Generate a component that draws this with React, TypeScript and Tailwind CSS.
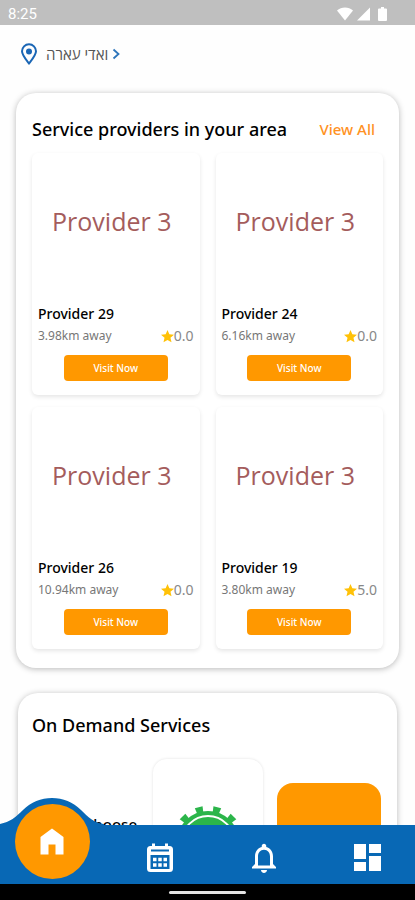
const providers = [
  { name: 'Provider 29', distance: '3.98km away', rating: '0.0' },
  { name: 'Provider 24', distance: '6.16km away', rating: '0.0' },
  { name: 'Provider 26', distance: '10.94km away', rating: '0.0' },
  { name: 'Provider 19', distance: '3.80km away', rating: '5.0' },
];

function StatusBar() {
  return (
    <div className="flex h-[25px] shrink-0 items-center justify-between bg-[#bfbfbf] pt-0.5 pr-7 pl-2 font-['Roboto',sans-serif] text-[15px] leading-5 text-white">
      <span>8:25</span>
      <div className="flex items-center gap-1">
        <svg className="h-[14px] w-4" viewBox="0 0 16 14" fill="white" aria-hidden="true">
          <path d="M0 3.500C4.400-.4 11.600-.4 16 3.500L8 13.500z" />
        </svg>
        <svg className="h-[14px] w-[13px]" viewBox="0 0 13 14" fill="white" aria-hidden="true">
          <path d="M0 13.500 13 .5v13z" />
        </svg>
        <svg className="ml-1 h-[14px] w-[9px]" viewBox="0 0 9 14" fill="white" aria-hidden="true">
          <path d="M1 1.500h2V0h3v1.500h2a1 1 0 0 1 1 1V13a1 1 0 0 1-1 1H1a1 1 0 0 1-1-1V2.500a1 1 0 0 1 1-1z" />
        </svg>
      </div>
    </div>
  );
}

function ProviderCard({ name, distance, rating }: { name: string; distance: string; rating: string }) {
  return (
    <article className="flex flex-col rounded-md bg-white px-1.5 pb-3.5 shadow-[0_2px_4px_rgba(0,0,0,0.10)]">
      <div className="flex h-[150px] items-center justify-center pr-2 pb-3 font-['Open_Sans',sans-serif] text-[25px] text-[#a45c5c]">
        Provider 3
      </div>
      <h3 className="text-sm leading-[22px] font-medium text-black">{name}</h3>
      <div className="flex h-[22px] items-center justify-between text-[#777]">
        <span className="text-xs">{distance}</span>
        <span className="flex items-center text-sm text-[#888]">
          <svg className="size-[13px]" viewBox="0 0 24 24" fill="#ffc107" aria-hidden="true">
            <path d="M12 18.300 19.400 22.800 17.500 14.300 24 8.700 15.400 7.900 12 0 8.600 7.900 0 8.700 6.500 14.300 4.600 22.800z" />
          </svg>
          {rating}
        </span>
      </div>
      <button
        type="button"
        className="mx-auto mt-2 h-[26px] w-2/3 rounded-sm bg-[#ff9800] text-[10px] font-medium text-white"
      >
        Visit Now
      </button>
    </article>
  );
}

function Gear() {
  return (
    <svg className="size-[72px]" viewBox="0 0 72 72" aria-hidden="true">
      <g fill="#2bb54a">
        <circle cx="36" cy="36" r="31" />
        {[15, 45, 75, 105, 135, 165, 195, 225, 255, 285, 315, 345].map((angle) => (
          <path key={angle} d="M33 7 32 0h8l-1 7z" transform={`rotate(${angle} 36 36)`} />
        ))}
      </g>
      <circle cx="36" cy="36" r="26" fill="none" stroke="white" strokeWidth="2" />
    </svg>
  );
}

function BottomNav() {
  return (
    <nav className="relative flex h-[59px] shrink-0 bg-[#0868b5]">
      <svg
        className="absolute bottom-full left-0 h-[27px] w-[104px]"
        viewBox="0 0 104 27"
        fill="#0868b5"
        aria-hidden="true"
      >
        <path d="M0 27V26C10 24 16 19 23 12 31 4 41 0 52 0S73 4 81 12C88 19 94 25 104 26V27z" />
      </svg>
      <div className="relative flex w-[104px] shrink-0 justify-center">
        <button
          type="button"
          aria-label="Home"
          className="-mt-[21px] flex size-[75px] items-center justify-center rounded-full bg-[#ff9800]"
        >
          <svg className="size-9" viewBox="0 0 36 36" fill="white" aria-hidden="true">
            <path d="M18 4.500 29.500 13v17.500h-8v-10h-7v10h-8V13z" />
          </svg>
        </button>
      </div>
      <div className="flex flex-1 items-center justify-between pt-1.5 pr-[34px] pl-[42px]">
        <button type="button" aria-label="Calendar">
          <svg className="h-[30px] w-7" viewBox="0 0 28 30" aria-hidden="true">
            <path
              d="M4.500 3H6V.5h3V3h10V.5h3V3h1.500A3.500 3.500 0 0 1 27 6.500v19a3.500 3.500 0 0 1-3.500 3.500h-19A3.500 3.500 0 0 1 1 25.500v-19A3.500 3.500 0 0 1 4.500 3z"
              fill="white"
            />
            <path d="M5 6.500h18v2H5zM4.500 12h19v14h-19z" fill="#0868b5" />
            <path d="M7 16.500h14M7 22h14" stroke="white" strokeWidth="3.500" strokeDasharray="3.500 1.750" />
          </svg>
        </button>
        <button type="button" aria-label="Notifications">
          <svg className="h-[30px] w-6" viewBox="4 2 16 20" fill="white" aria-hidden="true">
            <path d="M12 22c1.100 0 2-.9 2-2h-4c0 1.100.9 2 2 2zm6-6v-5c0-3.070-1.630-5.640-4.500-6.320V4c0-.83-.67-1.500-1.500-1.500s-1.500.67-1.500 1.500v.68C7.640 5.360 6 7.920 6 11v5l-2 2v1h16v-1l-2-2zm-2 1H8v-6c0-2.480 1.510-4.500 4-4.500s4 2.020 4 4.500v6z" />
          </svg>
        </button>
        <button type="button" aria-label="Dashboard">
          <svg className="size-[27px]" viewBox="3 3 18 18" fill="white" aria-hidden="true">
            <path d="M3 13h8V3H3v10zm0 8h8v-6H3v6zm10 0h8V11h-8v10zm0-18v6h8V3h-8z" />
          </svg>
        </button>
      </div>
    </nav>
  );
}

export default function App() {
  return (
    <div className="flex h-screen flex-col overflow-hidden bg-[#fefefe] font-['Noto_Sans',sans-serif]">
      <StatusBar />
      <main className="min-h-0 flex-1 overflow-hidden">
        <button type="button" className="flex h-[68px] items-center gap-2 pb-2.5 pl-5">
          <svg className="h-[22px] w-[18px]" viewBox="0 0 18 22" fill="none" aria-hidden="true">
            <path
              d="M9 20.500C5 15.500 2 12 2 8.300a7 7 0 0 1 14 0C16 12 13 15.500 9 20.500z"
              stroke="#1a66b5"
              strokeWidth="2"
            />
            <circle cx="9" cy="8.500" r="3" fill="#1a66b5" />
          </svg>
          <span className="flex items-center gap-1 text-[15px] text-[#555]">
            <span dir="rtl" lang="he" className="font-['Open_Sans','Noto_Sans',sans-serif]">
              ואדי עארה
            </span>
            <svg className="h-3 w-2" viewBox="0 0 8 12" fill="none" stroke="#2d75bb" strokeWidth="1.800" aria-hidden="true">
              <path d="M1.500 1.500 6.500 6l-5 4.500" />
            </svg>
          </span>
        </button>

        <section className="mx-4 rounded-[20px] bg-white px-4 pb-[19px] shadow-[0_1px_6px_rgba(0,0,0,0.28)]">
          <div className="flex h-[60px] items-center justify-between pt-3 pr-2">
            <h2 className="text-lg font-medium text-black">Service providers in your area</h2>
            <a href="#providers" className="text-[15px] font-medium text-[#ff9224]">
              View All
            </a>
          </div>
          <div id="providers" className="grid grid-cols-2 gap-x-4 gap-y-3">
            {providers.map((provider) => (
              <ProviderCard key={provider.name} {...provider} />
            ))}
          </div>
        </section>

        <section className="mx-[18px] mt-[25px] rounded-[20px] bg-white px-3.5 pt-4 pb-6 shadow-[0_1px_6px_rgba(0,0,0,0.28)]">
          <h2 className="text-lg leading-8 font-medium text-black">On Demand Services</h2>
          <div className="mt-[18px] grid grid-cols-[1fr_110px_104px] gap-x-3.5 pr-0.5">
            <p className="pt-[55px] pr-0.5 text-right text-[15px] leading-5 font-medium text-black">Choose</p>
            <div className="flex h-40 justify-center rounded-[14px] bg-white pt-[47px] shadow-[0_0_3px_rgba(0,0,0,0.12)]">
              <Gear />
            </div>
            <div className="mt-6 h-[104px] rounded-2xl bg-[#ff9800]" />
          </div>
        </section>
      </main>
      <BottomNav />
      <div className="flex h-4 shrink-0 items-center justify-center bg-black">
        <div className="h-[3px] w-[77px] rounded-full bg-[#e4e4e4]" />
      </div>
    </div>
  );
}
